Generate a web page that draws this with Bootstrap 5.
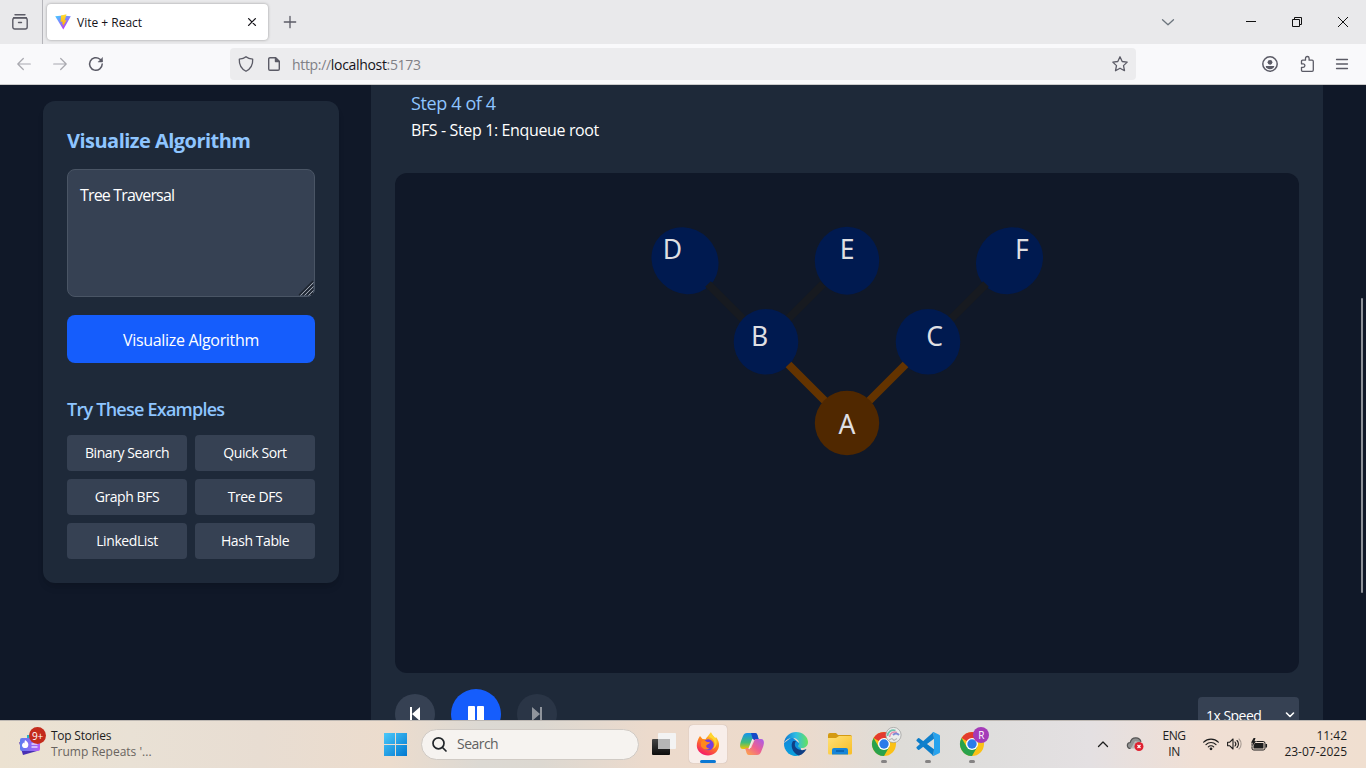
<!DOCTYPE html>
<html lang="en" data-bs-theme="light">
<head>
<meta charset="utf-8">
<meta name="viewport" content="width=device-width, initial-scale=1">
<title>Vite + React</title>
<link href="https://cdn.jsdelivr.net/npm/bootstrap@5.3.0/dist/css/bootstrap.min.css" rel="stylesheet">
<style>
  body { font-family: "Open Sans", "Noto Sans", sans-serif; letter-spacing: -.033em; height: 100vh; }
  svg { display: block; flex: none; overflow: visible; }
  .ln { fill: none; stroke: currentColor; stroke-linecap: round; stroke-linejoin: round; }

  /* Browser chrome */
  .tabstrip { height: 44px; background: #e9e9eb; color: #5b5b66; }
  .pinned { width: 43px; border-right: 1px solid #b5b5ba; padding-right: 2px; }
  .browser-tab { width: 221px; height: 36px; margin: 4px 0 0 4px; padding: 0 12px 0 8px; background: #fff; border-radius: 4px; box-shadow: 0 0 3px rgba(0,0,0,.35); color: #15141a; font-size: 12px; letter-spacing: 0; }
  .tab-title { margin-left: 6px; padding-top: 1px; }
  .winctl { width: 46px; }
  .toolbar { height: 41px; background: #f9f9fb; border-bottom: 1px solid #ccc; color: #5b5b66; }
  .nav-group { width: 230px; padding-left: 6px; }
  .nav-ico { width: 36px; }
  .urlbar { width: 906px; height: 32px; background: #ececee; border-radius: 4px; font-size: 14px; padding: 0 8px; letter-spacing: -.023em; }
  .urlbar .dim { color: #808086; }
  .urlbar .host { color: #15141a; }

  /* Application */
  .app { background: #101828; color: #fff; padding-left: 43px; gap: 32px; }
  .side { width: 296px; margin-top: 16px; padding: 24px; background: #1e2939; border-radius: 12px; box-shadow: 0 6px 10px -3px rgba(0,0,0,.12), 0 4px 6px -4px rgba(0,0,0,.1); }
  .side h2 { font-size: 20px; font-weight: 700; line-height: 28px; margin: 2px 0 14px; color: #8ec5ff; }
  .side h3 { font-size: 18px; font-weight: 600; line-height: 28px; margin: 32px 0 12px; color: #8ec5ff; letter-spacing: -.042em; }
  .prompt { margin-bottom: 18px; }
  .prompt textarea.form-control { height: 128px; padding: 13px 12px; background: #364153; border: 1px solid #4a5565; border-radius: 8px; color: #fff; font-size: 16px; letter-spacing: -.052em; box-shadow: none; resize: none; }
  .grip { right: 1px; bottom: 1px; }
  .btn-run { height: 48px; padding-top: 7px; background: #155dfc; color: #fff; border: 0; border-radius: 8px; font-size: 16px; letter-spacing: -.02em; }
  .examples { display: grid; grid-template-columns: 1fr 1fr; gap: 8px; }
  .btn-ex { height: 36px; padding: 0 0 2px; background: #364153; color: #fff; border: 0; border-radius: 4px; font-size: 14px; letter-spacing: -.03em; }
  .stage { width: 952px; padding: 0 24px; background: #1e2939; }
  .caption { height: 88px; padding: 4px 16px 0; }
  .caption .step { font-size: 18px; line-height: 28px; color: #8ec5ff; letter-spacing: -.021em; }
  .caption .what { font-size: 16px; line-height: 24px; margin-top: 1px; letter-spacing: -.023em; }
  .scene { height: 500px; background: #101828; border-radius: 12px; }
  .scene text { font-family: "Noto Sans", sans-serif; font-size: 26.5px; letter-spacing: 0; fill: #dfdfe2; text-anchor: middle; }
  .controls { height: 82px; gap: 16px; }
  .round { width: 40px; height: 40px; border: 0; padding: 0; border-radius: 50%; background: #364153; color: #fff; }
  .round.play { width: 50px; height: 50px; background: #155dfc; }
  .speed { width: 101px; height: 36px; margin-top: 2px; background: #364153; border-radius: 4px; padding: 0 4px 0 8px; font-size: 14px; }
  .gutter { width: 43px; margin-left: -32px; padding-right: 3px; }
  .thumb { width: 2px; height: 295px; margin-top: 213px; background: #8d9198; border-radius: 1px; }

  /* Taskbar */
  .taskbar { height: 48px; padding-bottom: 1px; border-top: 1px solid #bdb8b3; color: #1d1d1d; font-size: 12px; line-height: 16px;
    background: linear-gradient(90deg, #ece2d1 0, #e9e1d5 130px, #e8ddd2 260px, #ecdccd 390px, #dcd9d3 480px, #dcd8d1 540px, #ecdacc 650px, #eddacb 790px, #dedcd8 900px, #dfdedd 990px, #e4e0e2 1090px, #f0dfd4 1200px, #f0dfd0 100%); }
  .widgets { width: 374px; padding-left: 18px; }
  .headline { margin-left: 11px; letter-spacing: -.02em; }
  .headline .sub { color: #69645f; letter-spacing: 0; }
  .count { top: -6px; left: 11px; width: 17px; height: 17px; font-size: 10px; color: #fff; background: #c42b1c; border-radius: 50%; letter-spacing: -.02em; }
  .slot { width: 44px; height: 46px; }
  .slot.start { padding-right: 1px; }
  .slot.live::after { content: ""; position: absolute; bottom: 4px; left: 19px; width: 6px; height: 3px; border-radius: 2px; background: #858383; }
  .slot.current::before { content: ""; position: absolute; inset: 4px 3px 4px 3px; border-radius: 4px; background: #f8eeea; box-shadow: 0 0 1px #a99; }
  .slot.current::after { left: 14px; width: 16px; background: #0a78d4; }
  .slot svg { position: relative; }
  .find { width: 218px; height: 31px; margin: 0 3px; padding: 0 10px; border-radius: 16px; background: #f6f3f0; border: 1px solid #d0cac4; font-size: 14px; color: #606060; }
  .find span { margin-left: 10px; }
  .tray { padding-right: 19px; }
  .lang { width: 28px; margin: 0 15px 0 16px; }
  .clock { width: 79px; letter-spacing: 0; }
</style>
</head>
<body class="d-flex flex-column overflow-hidden">

<header class="tabstrip d-flex flex-shrink-0">
  <div class="pinned d-flex align-items-center justify-content-center">
    <svg class="ln" width="16" height="16" viewBox="0 0 16 16" stroke-width="1.4"><path d="M3 .8h10M1.6 3.6h12.8"/><rect x=".8" y="4" width="14.4" height="11" rx="2"/><path d="M6.5 8.5h3"/></svg>
  </div>
  <div class="browser-tab d-flex align-items-center">
    <svg width="16" height="16" viewBox="0 0 16 16"><defs><linearGradient id="vp" x1="0" y1="0" x2=".6" y2="1"><stop stop-color="#41d1ff"/><stop offset="1" stop-color="#bd34fe"/></linearGradient><linearGradient id="vy" x1="0" y1="0" x2="0" y2="1"><stop stop-color="#ffdd35"/><stop offset="1" stop-color="#ffa800"/></linearGradient></defs><path d="M.2 2.2 8 1.5l7.8.7L8.3 15.6z" fill="url(#vp)"/><path d="M11.5.3 6 1.4 5.6 8l2-.4-.5 2.8 1.3-.4-.8 3.3L11.7 6l-2 .4z" fill="url(#vy)"/></svg>
    <span class="tab-title">Vite + React</span>
    <svg class="ln ms-auto" width="8" height="8" viewBox="0 0 9 9" stroke-width="1.5"><path d="m.7.7 7.6 7.6M8.3.7.7 8.3"/></svg>
  </div>
  <div class="d-flex align-items-center ps-3"><svg class="ln" width="12" height="12" viewBox="0 0 12 12" stroke-width="1.3"><path d="M6 .3v11.4M.3 6h11.4"/></svg></div>
  <div class="d-flex align-items-center ms-auto text-black">
    <svg class="ln text-secondary" style="margin-right:54px" width="12" height="7" viewBox="0 0 12 7" stroke-width="1.3"><path d="m.5.7 5.5 5 5.5-5"/></svg>
    <div class="winctl d-flex justify-content-center"><svg width="10" height="10" viewBox="0 0 10 10"><path d="M0 4.500h10" stroke="#111"/></svg></div>
    <div class="winctl d-flex justify-content-center"><svg width="10" height="10" viewBox="0 0 10 10" fill="none" stroke="#111"><path d="M.5 2.5h7v7h-7zM2.5 2.5v-2h7v7h-2"/></svg></div>
    <div class="winctl d-flex justify-content-center"><svg width="10" height="10" viewBox="0 0 10 10" stroke="#111"><path d="m0 0 10 10M10 0 0 10"/></svg></div>
  </div>
</header>

<nav class="toolbar d-flex align-items-center flex-shrink-0">
  <div class="nav-group d-flex">
    <div class="nav-ico d-flex justify-content-center opacity-50"><svg class="ln" width="14" height="14" viewBox="0 0 14 14" stroke-width="1.2"><path d="M13.3 7H.8m5.5-5.5L.8 7l5.500 5.500"/></svg></div>
    <div class="nav-ico d-flex justify-content-center opacity-50"><svg class="ln" width="14" height="14" viewBox="0 0 14 14" stroke-width="1.2"><path d="M.7 7h12.5M7.7 1.500 13.200 7l-5.500 5.500"/></svg></div>
    <div class="nav-ico d-flex justify-content-center"><svg class="ln" width="14" height="14" viewBox="0 0 14 14" stroke-width="1.5"><path d="M13.200 7A6.300 6.300 0 1 1 11 2.200L13 4"/><path d="M13.500.8V5H9.300z" fill="currentColor" stroke-width=".5"/></svg></div>
  </div>
  <div class="urlbar d-flex align-items-center">
    <svg class="ln" width="16" height="16" viewBox="0 0 16 16" stroke-width="1.300"><path d="M8 .7c2 1.800 4.300 2.300 6.700 2.500.3 5.500-1.600 9.300-6.700 12.100C2.900 12.500 1 8.700 1.300 3.200 3.700 3 6 2.500 8 .7z"/></svg>
    <svg class="ln" style="margin-left:14px" width="12" height="14" viewBox="0 0 12 14" stroke-width="1.400"><path d="M2 .7h5.500L11.300 4.500V12a1.300 1.300 0 0 1-1.300 1.300H2A1.300 1.300 0 0 1 .7 12V2A1.300 1.300 0 0 1 2 .7z"/><path d="M7.500.7v3.800h3.800z" fill="currentColor"/></svg>
    <span class="url ms-2 ps-1"><span class="dim">http://</span><span class="host">localhost</span><span class="dim">:5173</span></span>
    <svg class="ln ms-auto" width="16" height="16" viewBox="0 0 16 16" stroke-width="1.300"><path d="m8 .8 2.200 4.700 5 .6-3.700 3.500 1 5.100L8 12.200l-4.500 2.500 1-5.100L.8 6.100l5-.6z"/></svg>
  </div>
  <div class="d-flex align-items-center ms-auto" style="padding-right:18px;gap:21.500px">
    <svg width="16" height="16" viewBox="0 0 16 16" fill="currentColor"><circle cx="8" cy="8" r="7.200" fill="none" stroke="currentColor" stroke-width="1.500"/><circle cx="8" cy="6.300" r="2.400"/><path d="M3.700 10h8.600c0 2-2 3.200-4.300 3.200S3.700 12 3.700 10z"/></svg>
    <svg class="ln" width="15" height="16" viewBox="0 0 15 16" stroke-width="1.300"><path d="M1.500 5.200a1 1 0 0 1 1-1h3V2.300a1.800 1.800 0 0 1 3.600 0v1.900h3a1.200 1.200 0 0 1 1.200 1.200v8.700a1.200 1.200 0 0 1-1.200 1.200H2.500a1 1 0 0 1-1-1v-3h1.700a1.700 1.700 0 0 0 0-3.400H1.500z"/></svg>
    <svg class="ln" width="12" height="12" viewBox="0 0 12 12" stroke-width="1.300"><path d="M.5 1.500h11M.5 6h11M.5 10.500h11"/></svg>
  </div>
</nav>

<main class="app d-flex flex-grow-1 overflow-hidden align-items-start" style="min-height:0">
  <aside class="side flex-shrink-0">
    <h2>Visualize Algorithm</h2>
    <div class="prompt position-relative">
      <textarea class="form-control" spellcheck="false">Tree Traversal</textarea>
      <svg class="grip position-absolute" width="15" height="15" viewBox="0 0 15 15" fill="none"><path d="M0 14 14 0M4 14 14 4M8 14l6-6M12 14l2-2" stroke="#1c222c" stroke-width="1.200"/><path d="M1.500 14.500 14.500 1.500M5.500 14.500l9-9M9.500 14.500l5-5" stroke="#a9aeb6" stroke-width=".9"/></svg>
    </div>
    <button class="btn btn-run w-100">Visualize Algorithm</button>
    <h3>Try These Examples</h3>
    <div class="examples">
      <button class="btn btn-ex">Binary Search</button><button class="btn btn-ex">Quick Sort</button>
      <button class="btn btn-ex">Graph BFS</button><button class="btn btn-ex">Tree DFS</button>
      <button class="btn btn-ex">LinkedList</button><button class="btn btn-ex">Hash Table</button>
    </div>
  </aside>
  <section class="stage flex-shrink-0">
    <div class="caption"><div class="step"><span>Step 4 of 4</span></div><div class="what"><span>BFS - Step 1: Enqueue root</span></div></div>
    <div class="scene">
      <svg width="904" height="500" viewBox="395 173 904 500">
        <g fill="#001a50"><ellipse cx="685" cy="260.700" rx="35" ry="32" transform="rotate(45 685 260.700)"/><ellipse cx="847" cy="260.700" rx="32.200" ry="34"/><ellipse cx="1009.500" cy="260.700" rx="35" ry="32" transform="rotate(-45 1009.500 260.700)"/></g>
        <g stroke="#171a20" stroke-width="8"><path d="M708 284l36 36M823 284l-36 36M986 284l-36 36"/></g>
        <g fill="#001a50"><ellipse cx="766" cy="341.700" rx="32.300" ry="32.800"/><ellipse cx="928" cy="341.700" rx="32.300" ry="32.800"/></g>
        <g stroke="#633300" stroke-width="8"><path d="M788.500 364.500l38 38M905.500 364.500l-38 38"/></g>
        <circle cx="847" cy="423" r="32.200" fill="#502800"/>
        <text x="672.500" y="258.800">D</text><text x="847" y="258.800">E</text><text x="1022" y="258.800">F</text>
        <text x="759.500" y="346">B</text><text x="934.500" y="346">C</text><text x="847" y="433.500">A</text>
      </svg>
    </div>
    <div class="controls d-flex align-items-center">
      <button class="round d-flex align-items-center justify-content-center"><svg width="10" height="14" viewBox="0 0 10 14" fill="currentColor"><path d="M0 0h2v14H0zM10 0v14L2 7z"/></svg></button>
      <button class="round play d-flex align-items-center justify-content-center"><svg width="16" height="16" viewBox="0 0 16 16" fill="currentColor"><rect width="7" height="16" rx="1"/><rect x="9" width="7" height="16" rx="1"/></svg></button>
      <button class="round d-flex align-items-center justify-content-center opacity-50"><svg width="10" height="14" viewBox="0 0 10 14" fill="currentColor"><path d="M8 0h2v14H8zM0 0v14l8-7z"/></svg></button>
      <div class="speed d-flex align-items-center justify-content-between ms-auto"><span>1x Speed</span><svg class="ln" width="10" height="6" viewBox="0 0 10 6" stroke-width="1.600"><path d="m1.500 1 3.500 3.500L8.500 1"/></svg></div>
    </div>
  </section>
  <div class="gutter d-flex justify-content-end"><div class="thumb"></div></div>
</main>

<footer class="taskbar d-flex align-items-center flex-shrink-0">
  <div class="widgets d-flex align-items-center flex-shrink-0">
    <div class="position-relative">
      <svg width="22" height="22" viewBox="0 0 22 22"><defs><linearGradient id="wg" x1="0" x2="1"><stop stop-color="#5b7df0"/><stop offset="1" stop-color="#b45cf5"/></linearGradient></defs><path d="M1 9l18 9-14 4z" fill="#4930b5"/><path d="M9 2h8v10H9z" fill="#25b5c8"/><rect x="2" y="5" width="20" height="13" rx="2" fill="url(#wg)"/><path d="M7 7c3 2 4 4 3 6.500-1 2.500-6 2-6-1 0-1.500 1-2 1.200-3l1 1z" fill="#fff"/><path d="M13.500 11h6M13.500 14h6" stroke="#e7d5ff" stroke-width="1.300"/></svg>
      <span class="count position-absolute d-flex align-items-center justify-content-center">9+</span>
    </div>
    <div class="headline"><div>Top Stories</div><div class="sub">Trump Repeats '...</div></div>
  </div>
  <div class="slot start d-flex align-items-center justify-content-center"><svg width="23" height="23" viewBox="0 0 23 23"><defs><linearGradient id="wn" x1="0" y1="0" x2="1" y2="1"><stop stop-color="#4cc9fa"/><stop offset="1" stop-color="#0078d0"/></linearGradient></defs><path d="M0 0h11v11H0zM12 0h11v11H12zM0 12h11v11H0zM12 12h11v11H12z" fill="url(#wn)"/></svg></div>
  <div class="find d-flex align-items-center"><svg class="ln text-dark" width="15" height="15" viewBox="0 0 15 15" stroke-width="1.700"><circle cx="6.500" cy="6.300" r="5.500"/><path d="m10.500 10.500 3.500 3.500"/></svg><span>Search</span></div>
  <div class="slot d-flex align-items-center justify-content-center"><svg width="24" height="22" viewBox="0 0 24 22"><defs><linearGradient id="tv" x1="0" y1="0" x2="0" y2="1"><stop stop-color="#444"/><stop offset="1" stop-color="#0c0c0c"/></linearGradient></defs><rect x="0" y="6" width="18" height="16" rx="1" fill="url(#tv)"/><rect x="6" y="0" width="18" height="16" rx="1" fill="#f3f3f3"/><path d="M6 6h12v10H6z" fill="#b5b5b5"/></svg></div>
  <div class="slot current live position-relative d-flex align-items-center justify-content-center"><svg width="24" height="24" viewBox="0 0 24 24"><defs><linearGradient id="ff" x1=".8" y1="0" x2=".3" y2="1"><stop stop-color="#ffe83d"/><stop offset=".45" stop-color="#ff8a16"/><stop offset="1" stop-color="#f5156c"/></linearGradient></defs><path d="M4 4l2.500 3 3 .2C11 5 13 3 15 0c.5 3 3 4.500 4 6.500l1-1.500c2 2.500 3.500 5.500 3 9-1 6-5.500 9.500-11 9.500S1 19.500.8 14C.7 10 2 7 4 4z" fill="url(#ff)"/><circle cx="12.200" cy="12.800" r="5.500" fill="#7540dd"/><path d="M5 10c2-2 4-2 6 0l3 .3c-.5 2-2.500 1.700-3.500 3-1 1.500.5 3 3 3-3 2.500-7 1-8.500-2z" fill="#ff891d"/><path d="M13 5c4 1 6 4.500 5.500 8-.5 2.500-1.500 3.500-2.500 4 5-1 5.500-7 4-10L15 1z" fill="#ffd52d"/></svg></div>
  <div class="slot d-flex align-items-center justify-content-center"><svg width="24" height="22" viewBox="0 0 24 22"><defs><linearGradient id="ca" x1="0" y1="0" x2="0" y2="1"><stop stop-color="#1493ee"/><stop offset=".6" stop-color="#42bd77"/><stop offset="1" stop-color="#f3c400"/></linearGradient><linearGradient id="cb" x1="1" y1="0" x2="0" y2="1"><stop stop-color="#a45bf0"/><stop offset=".5" stop-color="#ef608e"/><stop offset="1" stop-color="#ffae43"/></linearGradient></defs><path d="M7 0h8c2 0 2.500 2 3 4l1 3h-6L9 16H3C-1 16 0 11 1 8l2-5c.8-2 2-3 4-3z" fill="url(#ca)"/><path d="M11 0h4c2 0 2.500 2 3 4l.8 3H13z" fill="#1649c7"/><path d="M17 22H9c-2 0-2.500-2-3-4l-1-3h6l4-9h6c4 0 3 5 2 8l-2 5c-.8 2-2 3-4 3z" fill="url(#cb)"/><path d="M13 6l-4 10" stroke="#fbe4ea" stroke-width="1.500"/></svg></div>
  <div class="slot d-flex align-items-center justify-content-center"><svg width="24" height="24" viewBox="0 0 24 24"><defs><linearGradient id="ed" x1="0" y1=".3" x2="1" y2=".3"><stop stop-color="#0c76d0"/><stop offset=".5" stop-color="#30bde4"/><stop offset="1" stop-color="#67e35b"/></linearGradient><linearGradient id="ee" x1="0" y1="0" x2="0" y2="1"><stop stop-color="#1286dc"/><stop offset="1" stop-color="#0ba0dc"/></linearGradient></defs><path d="M0 11a12 12 0 0 0 15 12.600l3-3-3-9.600L8 5z" fill="url(#ee)"/><path d="M0 11C1 4 6 0 12 0c7 0 12 5 12 10 0 4-3 6-6 6-2 0-4-.5-4-2 0-.8 1-1 1-2.700C15 8 12 6 8.500 6 4 6 1 9 0 11z" fill="url(#ed)"/><path d="M9 9c-3 4-1 12 6 14.600 4-1 6-4 7.500-6.500-4 2-9 1-11-2-1-2-1-4 .5-6z" fill="#103f84"/></svg></div>
  <div class="slot d-flex align-items-center justify-content-center"><svg width="24" height="22" viewBox="0 0 24 22"><defs><linearGradient id="fo" x1="0" y1="0" x2="1" y2="1"><stop stop-color="#ffe176"/><stop offset="1" stop-color="#f8bd25"/></linearGradient></defs><path d="M0 2Q0 0 2 0h6l2 2h12q2 0 2 2v4H0z" fill="#d49a12"/><path d="M0 5h8l3-2h12q1 0 1 1v16q0 1.500-1.500 1.500h-21Q0 21.500 0 20z" fill="url(#fo)"/><path d="M4 21.500V17q0-2 2-2h12q2 0 2 2v4.500z" fill="#1685d8"/><path d="M8 18h8" stroke="#075da9" stroke-width="1.500"/></svg></div>
  <div class="slot live position-relative d-flex align-items-center justify-content-center"><svg width="24" height="24" viewBox="0 0 24 24"><g id="chrome"><circle cx="12" cy="12" r="12" fill="#fbc116"/><path d="M12 12 1.600 6A12 12 0 0 1 22.400 6H12z" fill="#e33b2e"/><path d="M1.600 6A12 12 0 0 0 12 24l5.200-9L12 12 6.800 15z" fill="#29a24c"/><circle cx="12" cy="12" r="6" fill="#fff"/><circle cx="12" cy="12" r="4.700" fill="#297bea"/></g><circle cx="21.500" cy="3" r="7.600" fill="#eceeec" stroke="#999" stroke-width=".7"/><path d="M15.500 4c0-4 4-7 8-5.500" fill="none" stroke="#6fc2ae" stroke-width="1.800"/><path d="M17.500 5c.5-4 4-6 7.500-4.500" fill="none" stroke="#e58fae" stroke-width="1.500"/><path d="M21 3c2-2 4-2 6 0" fill="none" stroke="#7d8bd6" stroke-width="2"/><path d="M17 8l3-1.500 2 2 3-2" fill="none" stroke="#b9b9b9" stroke-width="1.300"/></svg></div>
  <div class="slot live position-relative d-flex align-items-center justify-content-center"><svg width="24" height="24" viewBox="0 0 24 24"><path d="M17.500 24 .6 8.900q-.5-.7 0-1.200L2 6.200q.6-.5 1.300 0L18 17.300z" fill="#0b7cc8"/><path d="M17.500 0 .6 15.100q-.5.700 0 1.200L2 17.800q.6.500 1.300 0L18 6.700z" fill="#1080cc"/><path d="M17.500 0 23.200 2.700q.8.400.8 1.300v16q0 .9-.8 1.300L17.500 24q-1 .2-1.500-.5 2 .5 2-1.500V2q0-2-2-1.500.5-.7 1.500-.5z" fill="#27a3ee"/></svg></div>
  <div class="slot live position-relative d-flex align-items-center justify-content-center"><svg width="24" height="24" viewBox="0 0 24 24"><use href="#chrome"/><circle cx="21" cy="3" r="8" fill="#a43bb8"/><text x="21" y="6.800" font-size="10" text-anchor="middle" fill="#fff">R</text></svg></div>

  <div class="tray d-flex align-items-center ms-auto">
    <svg class="ln" width="10" height="6" viewBox="0 0 10 6" stroke-width="1.300"><path d="M.5 5.500 5 1l4.500 4.500"/></svg>
    <svg style="margin-left:19px" width="17" height="14" viewBox="0 0 17 14"><path d="M3.500 11.500a3 3 0 0 1-.3-6C4 2 6.500.7 9 .8c3 .1 4.500 2 5 4" fill="#929292" stroke="#555" stroke-width="1.200"/><path d="M4 11.500h5L13 5 8 4z" fill="#b7b7b7"/><circle cx="12" cy="9.500" r="4.500" fill="#e02030"/><path d="m10.500 8 3 3m0-3-3 3" stroke="#fff" stroke-width="1.200"/></svg>
    <div class="lang text-center">ENG<br>IN</div>
    <svg class="ln" width="16" height="12" viewBox="0 0 16 12" stroke-width="1.200"><path d="M.7 4.200a10.300 10.300 0 0 1 14.600 0M3 6.600a7 7 0 0 1 10 0M5.300 8.900a3.800 3.800 0 0 1 5.400 0"/><circle cx="8" cy="10.800" r=".8" fill="currentColor"/></svg>
    <svg class="ln" style="margin-left:8px" width="15" height="12" viewBox="0 0 15 12" stroke-width="1.100"><path d="M.6 4.200h2.200L6 1v10L2.800 7.800H.6zM8 4a3 3 0 0 1 0 4M10 2.500a5 5 0 0 1 0 7"/><path d="M12 1a7 7 0 0 1 0 10" opacity=".35"/></svg>
    <svg style="margin-left:9px" width="17" height="13" viewBox="0 0 17 13"><rect x="1" y="3.500" width="13" height="8.500" rx="1.800" fill="none" stroke="#1d1d1d"/><rect x="2.500" y="5" width="10" height="5.500" rx=".6" fill="#1d1d1d"/><path d="M15.300 6v3.500" stroke="#1d1d1d" stroke-width="1.500"/><path d="M2.600 0 0 4.800h1.800L1 8.500 5.200 3.300H3.500L4.500 0z" fill="#1d1d1d" stroke="#f0dfd4" stroke-width=".8" paint-order="stroke"/></svg>
    <div class="clock text-end"><div>11:42</div><div>23-07-2025</div></div>
  </div>
</footer>
<script src="https://cdn.jsdelivr.net/npm/bootstrap@5.3.0/dist/js/bootstrap.bundle.min.js"></script>
</body>
</html>
